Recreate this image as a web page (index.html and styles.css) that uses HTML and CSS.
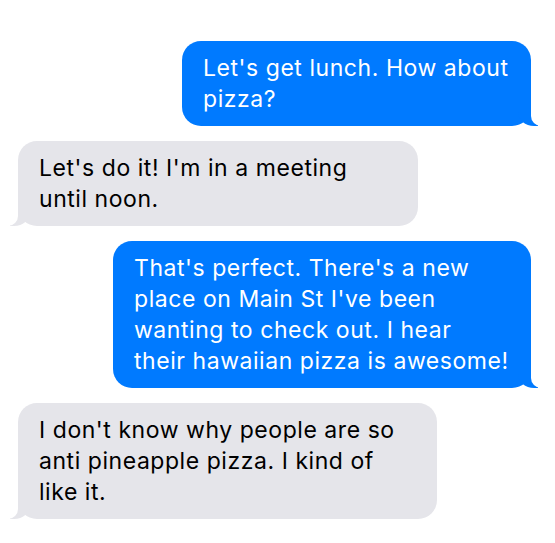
FILE: index.html
```html
<!DOCTYPE html>
<html lang="en">
<head>
<meta charset="utf-8">
<title>Messages</title>
<link rel="stylesheet" href="styles.css">
</head>
<body>
<main class="thread">
  <div class="bubble sent w1">Let's get lunch. How about<br>pizza?</div>
  <div class="bubble received w2">Let's do it! I'm in a meeting<br>until noon.</div>
  <div class="bubble sent w3">That's perfect. There's a new<br>place on Main St I've been<br>wanting to check out. I hear<br>their hawaiian pizza is awesome!</div>
  <div class="bubble received w4">I don't know why people are so<br>anti pineapple pizza. I kind of<br>like it.</div>
</main>
</body>
</html>
```
FILE: styles.css
```css
html, body {
  margin: 0;
  background: #ffffff;
}
body {
  font-family: Inter, "Noto Sans", "Liberation Sans", sans-serif;
  width: 555px;
  height: 543px;
  overflow: hidden;
}
.thread {
  display: flex;
  flex-direction: column;
  gap: 15px;
  padding: 41px 24px 0 18px;
}
.bubble {
  position: relative;
  box-sizing: border-box;
  font-size: 23px;
  line-height: 31px;
  letter-spacing: 0.55px;
  padding: 12px 21px 11px;
  border-radius: 19px;
  white-space: nowrap;
}
.bubble.sent {
  align-self: flex-end;
  background: #007aff;
  color: #ffffff;
}
.bubble.received {
  align-self: flex-start;
  background: #e5e5ea;
  color: #000000;
}
.bubble::before,
.bubble::after {
  content: "";
  position: absolute;
  bottom: 0;
  height: 20px;
}
.bubble.sent::before {
  right: -7px;
  width: 20px;
  background: #007aff;
  border-bottom-left-radius: 16px 14px;
}
.bubble.sent::after {
  right: -10px;
  width: 10px;
  background: #ffffff;
  border-bottom-left-radius: 10px;
}
.bubble.received::before {
  left: -8px;
  width: 20px;
  background: #e5e5ea;
  border-bottom-right-radius: 16px 14px;
}
.bubble.received::after {
  left: -10px;
  width: 10px;
  background: #ffffff;
  border-bottom-right-radius: 10px;
}
.w1 { width: 349px; }
.w2 { width: 400px; }
.w3 { width: 418px; }
.w4 { width: 419px; }
```
